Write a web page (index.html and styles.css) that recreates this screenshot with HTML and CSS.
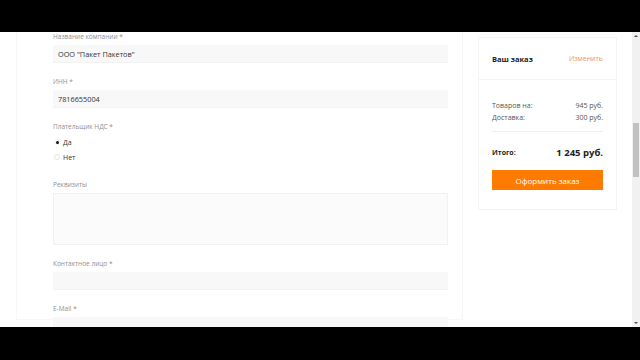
FILE: index.html
```html
<!DOCTYPE html>
<html lang="ru">
<head>
  <meta charset="UTF-8" />
  <meta name="viewport" content="width=device-width, initial-scale=1.0" />
  <title>Оформление заказа</title>
  <link rel="stylesheet" href="styles.css">
</head>
<body>
  <div class="black-bar top"></div>

  <div class="viewport">
    <div class="page">
      <main class="form-card">
        <div class="field">
          <label>Название компании *</label>
          <div class="input">ООО "Пакет Пакетов"</div>
        </div>

        <div class="field">
          <label>ИНН *</label>
          <div class="input">7816655004</div>
        </div>

        <div class="field">
          <label>Плательщик НДС *</label>
          <div class="radio-row">
            <span class="radio checked"></span>
            <span>Да</span>
          </div>
          <div class="radio-row">
            <span class="radio"></span>
            <span>Нет</span>
          </div>
        </div>

        <div class="field">
          <label>Реквизиты</label>
          <div class="input textarea"></div>
        </div>

        <div class="field">
          <label>Контактное лицо *</label>
          <div class="input"></div>
        </div>

        <div class="field">
          <label>E-Mail *</label>
          <div class="input"></div>
        </div>
      </main>

      <aside class="side">
        <div class="order-card">
          <div class="order-head">
            <span class="order-title">Ваш заказ</span>
            <span class="order-edit">Изменить</span>
          </div>
          <div class="order-body">
            <div class="order-line">
              <span>Товаров на:</span>
              <span>945 руб.</span>
            </div>
            <div class="order-line">
              <span>Доставка:</span>
              <span>300 руб.</span>
            </div>
            <div class="order-total">
              <span class="total-label">Итого:</span>
              <span class="total-sum">1 245 руб.</span>
            </div>
            <button class="order-btn">Оформить заказ</button>
          </div>
        </div>
      </aside>
    </div>

    <div class="scrollbar">
      <svg class="arrow" width="8" height="8" viewBox="0 0 8 8"><path d="M2 5 L4 3 L6 5 Z" fill="#505050"/></svg>
      <div class="track">
        <div class="thumb"></div>
      </div>
      <svg class="arrow" width="8" height="8" viewBox="0 0 8 8"><path d="M2 3 L4 5 L6 3 Z" fill="#505050"/></svg>
    </div>
  </div>

  <div class="black-bar bottom"></div>
</body>
</html>
```

FILE: styles.css
```css
* {
  box-sizing: border-box;
}

html, body {
  margin: 0;
  padding: 0;
  background: #000;
}

body {
  width: 640px;
  height: 360px;
  overflow: hidden;
  font-family: "Open Sans", "Noto Sans", sans-serif;
  display: flex;
  flex-direction: column;
}

.black-bar {
  background: #000;
}

.black-bar.top {
  height: 32px;
}

.black-bar.bottom {
  height: 33px;
}

.viewport {
  height: 295px;
  background: #fff;
  display: flex;
  overflow: hidden;
}

.page {
  flex: 1;
  display: flex;
  align-items: flex-start;
  padding-left: 16px;
}

/* левая колонка с формой */
.form-card {
  width: 447px;
  height: 288px;
  border: 1px solid #f7f7f7;
  border-top: none;
  padding: 0 14px 0 36px;
}

.field {
  margin-bottom: 14px;
}

.field label {
  display: block;
  font-size: 6.5px;
  line-height: 10px;
  color: #8f8f8f;
  margin-bottom: 3px;
}

.input {
  height: 18px;
  background: #f8f8f8;
  border-bottom: 1px solid #f2f2f2;
  font-size: 7.3px;
  line-height: 18px;
  color: #333;
  padding-left: 5px;
}

.textarea {
  height: 52px;
  background: #fbfbfb;
  border: 1px solid #f1f1f1;
}

.radio-row {
  display: flex;
  align-items: center;
  gap: 3px;
  height: 14px;
  margin-top: 1px;
  font-size: 7px;
  color: #333;
  padding-left: 1px;
}

.radio {
  width: 6px;
  height: 6px;
  border-radius: 50%;
  border: 1px solid #e4e4e4;
  background: #fff;
  position: relative;
}

.radio.checked {
  border-color: #f0f0f0;
}

.radio.checked::after {
  content: "";
  position: absolute;
  left: 0.5px;
  top: 0.5px;
  width: 3px;
  height: 3px;
  border-radius: 50%;
  background: #111;
}

.field:nth-child(3) {
  margin-bottom: 16px;
}

/* правая колонка */
.side {
  flex: 1;
  padding: 5px 15px 0 15px;
}

.order-card {
  width: 139px;
  border: 1px solid #f4f4f4;
}

.order-head {
  height: 42px;
  display: flex;
  align-items: center;
  justify-content: space-between;
  padding: 0 13px;
  border-bottom: 1px solid #f4f4f4;
}

.order-title {
  font-size: 7.5px;
  font-weight: bold;
  color: #222;
}

.order-edit {
  font-size: 7px;
  color: #e89a55;
}

.order-body {
  padding: 20px 13px 19px;
}

.order-line {
  display: flex;
  justify-content: space-between;
  font-size: 7px;
  line-height: 12px;
  color: #555;
}

.order-total {
  display: flex;
  justify-content: space-between;
  align-items: center;
  border-top: 1px solid #efefef;
  margin-top: 7px;
  padding-top: 14px;
  height: 37px;
  padding-bottom: 10px;
}

.total-label {
  font-size: 7px;
  font-weight: bold;
  color: #222;
}

.total-sum {
  font-size: 9.5px;
  font-weight: bold;
  color: #222;
}

.order-btn {
  display: block;
  width: 100%;
  height: 20px;
  margin-top: 2px;
  border: none;
  background: #ff7a00;
  color: #fff;
  font-family: inherit;
  font-size: 8px;
  padding: 0;
}

/* полоса прокрутки браузера */
.scrollbar {
  width: 8px;
  background: #f1f1f1;
  display: flex;
  flex-direction: column;
}

.arrow {
  display: block;
}

.track {
  flex: 1;
  padding-top: 83px;
}

.thumb {
  width: 6px;
  height: 54px;
  margin-left: 1px;
  background: #c1c1c1;
}
```
